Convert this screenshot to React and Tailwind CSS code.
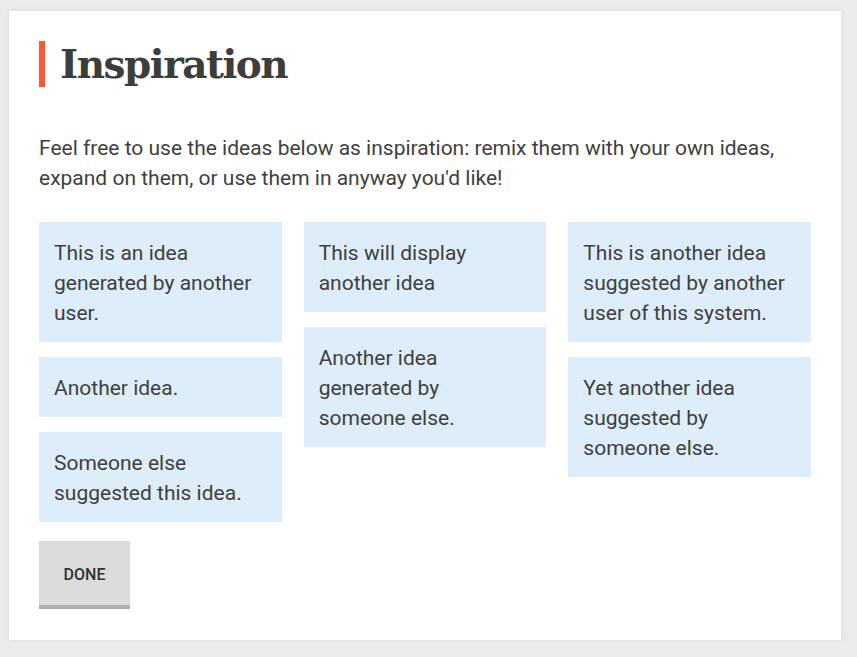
import React from "react";

const columns = [
  ["This is an idea generated by another user.", "Another idea.", "Someone else suggested this idea."],
  ["This will display another idea", "Another idea generated by someone else."],
  ["This is another idea suggested by another user of this system.", "Yet another idea suggested by someone else."],
];

const App = () => {
  return (
    <div className="min-h-screen bg-[#ebebeb] pt-[11px] pl-[9px] pr-[16px] pb-[17px] font-['Roboto',sans-serif]">
      <div className="bg-white shadow-[0_0_6px_rgba(0,0,0,0.08)] px-[30px] pt-[30px] pb-[31px] text-[#404040]">
        {/* Header */}
        <div className="flex items-center h-[46px]">
          <div className="w-[6px] h-[46px] bg-[#ff5733]" />
          <h1 className="ml-[15px] text-[39px] leading-none font-bold text-[#3d3d3a] font-['DejaVu_Serif',serif] tracking-[-1.5px]">
            Inspiration
          </h1>
        </div>

        <p className="mt-[46px] text-[21px] leading-[30px]">
          Feel free to use the ideas below as inspiration: remix them with your own ideas,
          expand on them, or use them in anyway you'd like!
        </p>

        {/* Ideas */}
        <div className="mt-[29px] grid grid-cols-3 gap-x-[22px] items-start">
          {columns.map((col, i) => (
            <div key={i} className="flex flex-col gap-[15px]">
              {col.map((idea) => (
                <div key={idea} className="bg-[#ddeefa] px-[15px] pt-[16px] pb-[14px] text-[21px] leading-[30px]">
                  {idea}
                </div>
              ))}
            </div>
          ))}
        </div>

        <button className="mt-[19px] w-[91px] h-[68px] pt-[4px] bg-[#dcdcdc] border-b-4 border-[#b0b0b0] text-[16px] font-medium text-[#333] uppercase">
          Done
        </button>
      </div>
    </div>
  );
};

export default App;
